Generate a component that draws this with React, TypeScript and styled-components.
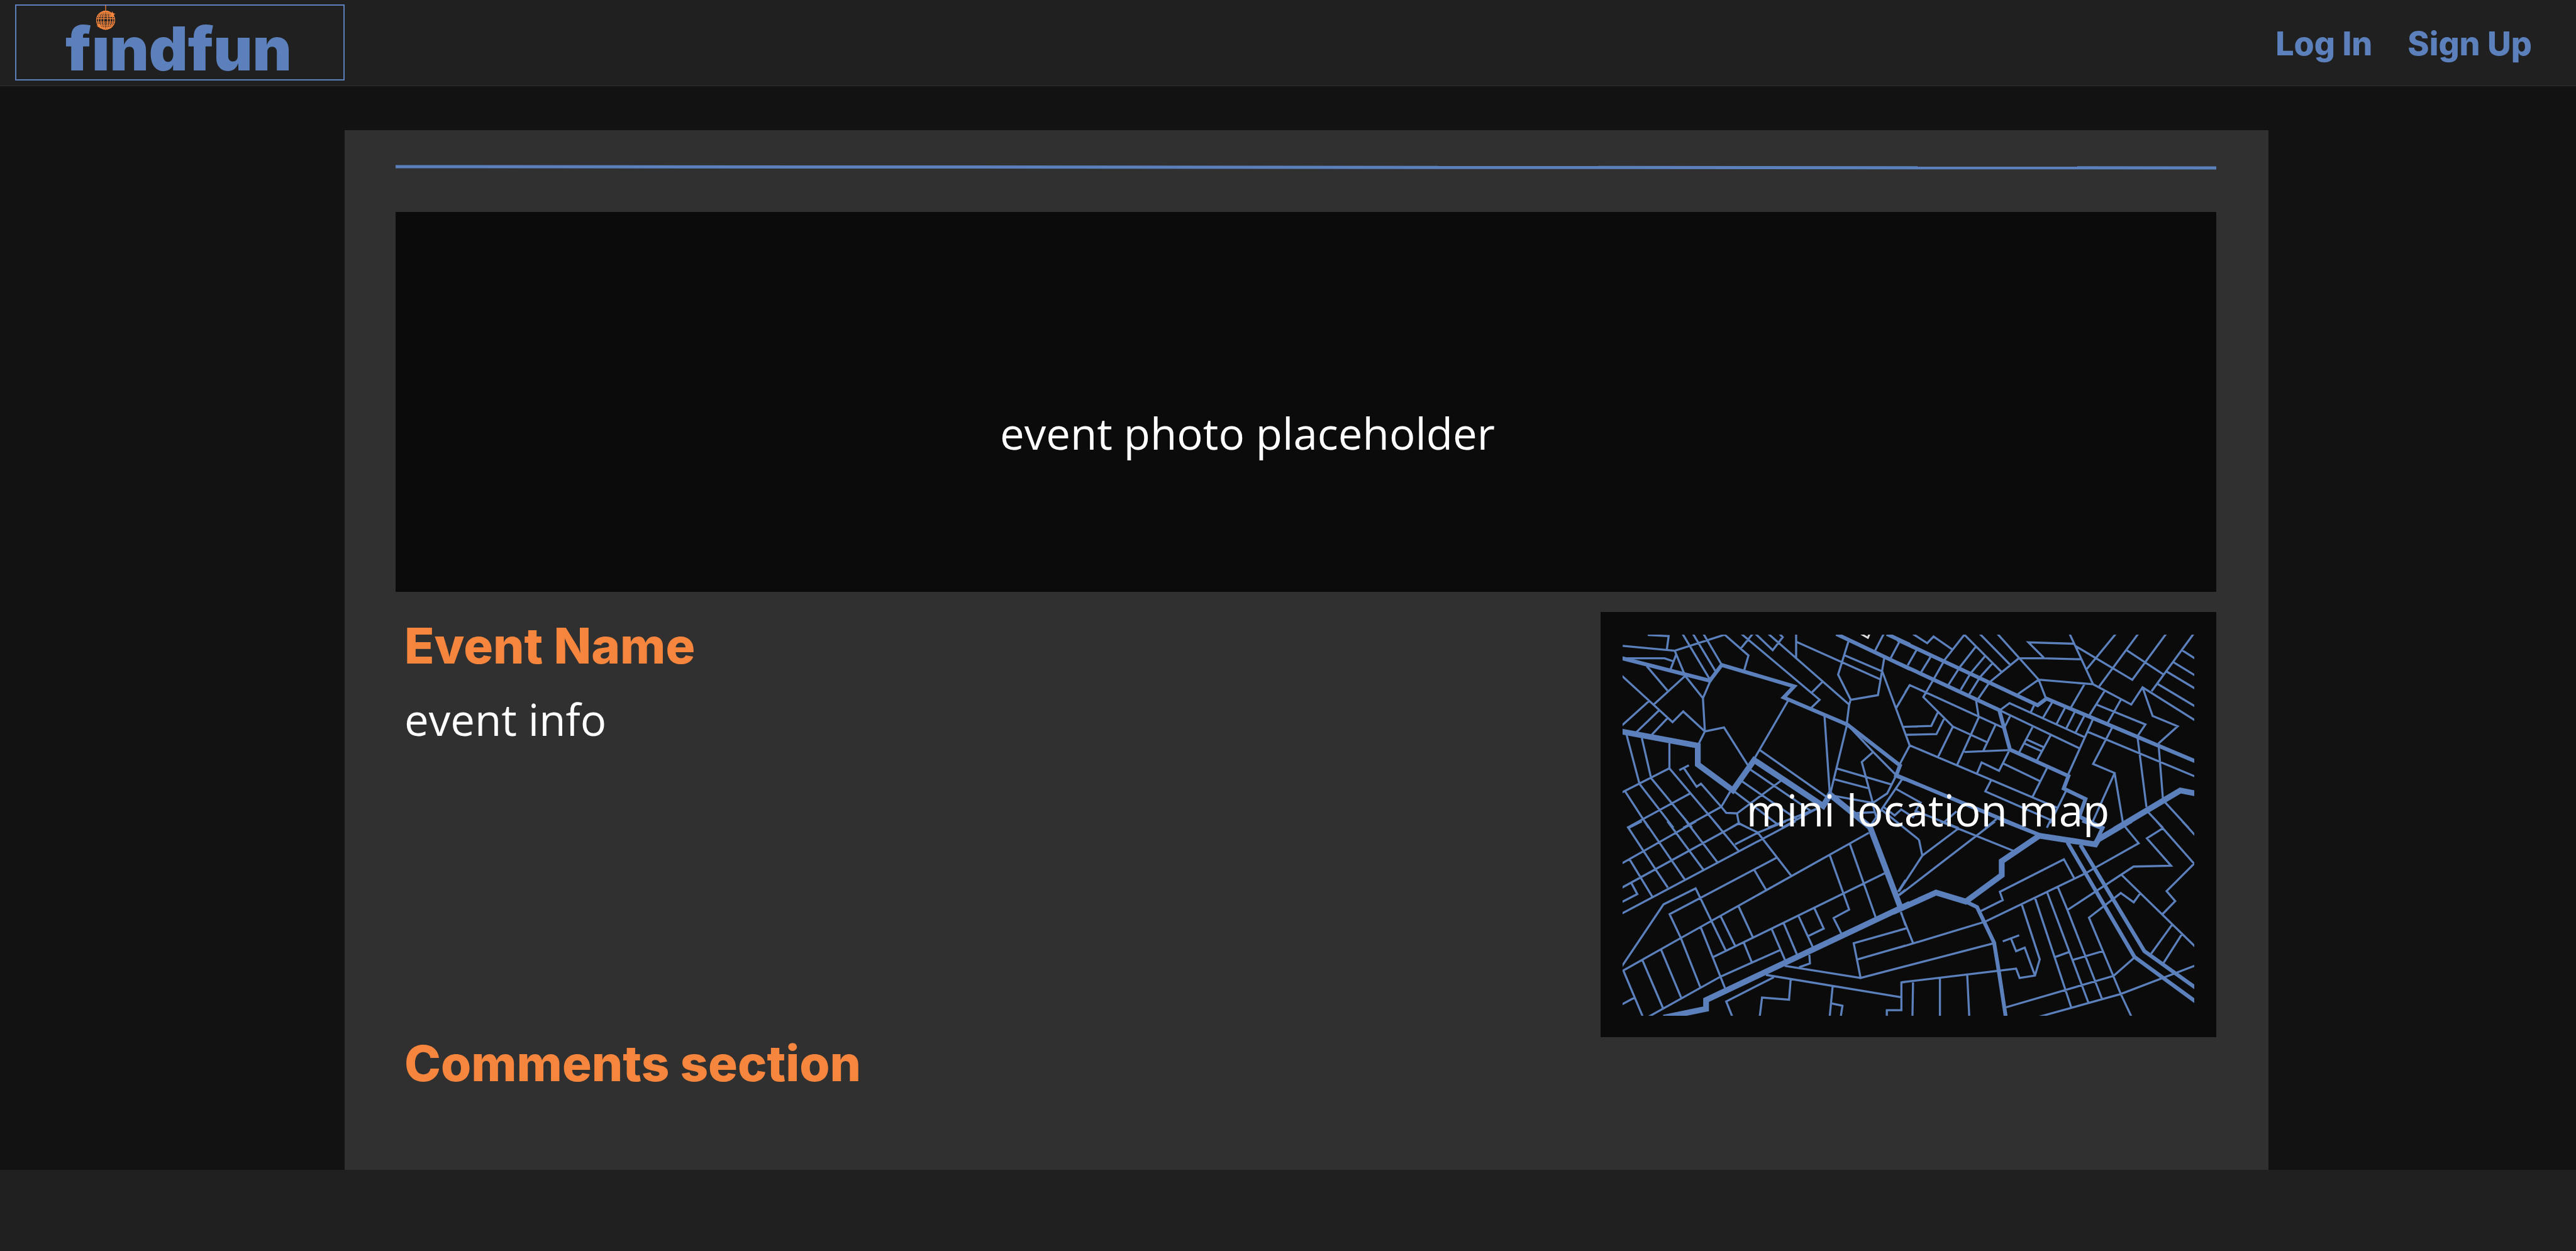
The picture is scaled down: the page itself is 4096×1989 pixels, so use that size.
import React from "react";
import styled, { createGlobalStyle, ThemeProvider } from "styled-components";

const theme = {
  blue: "#5b80bc",
  orange: "#f6863e",
  page: "#121212",
  bar: "#202020",
  card: "#303030",
  well: "#0b0b0b",
  display: "Inter, sans-serif",
  body: '"Open Sans", "Noto Sans", sans-serif',
};

type Theme = typeof theme;
const t = (key: keyof Theme) => (props: { theme: any }) => props.theme[key];

const GlobalStyle = createGlobalStyle`
  *, *::before, *::after { box-sizing: border-box; }
  body {
    margin: 0;
    background: ${theme.page};
    color: #fff;
    font-family: ${theme.body};
  }
`;

const Page = styled.div`
  min-height: 100vh;
  display: flex;
  flex-direction: column;
`;

const Header = styled.header`
  display: flex;
  align-items: center;
  justify-content: space-between;
  padding: 7px 70px 8px 24px;
  background: ${t("bar")};
  border-bottom: 1px solid #303030;
`;

const LogoLink = styled.a`
  position: relative;
  display: flex;
  justify-content: center;
  width: 524px;
  height: 121px;
  padding-right: 4px;
  border: 2px solid ${t("blue")};
  color: ${t("blue")};
  text-decoration: none;
`;

const Wordmark = styled.span`
  font-family: ${t("display")};
  font-weight: 900;
  font-size: 96px;
  line-height: 136px;
`;

const DiscoBall = styled.svg`
  position: absolute;
  left: 124px;
  top: -2px;
  width: 36px;
  height: 44px;
  fill: none;
  stroke: ${t("orange")};
`;

const Nav = styled.nav`
  display: flex;
  gap: 56px;
  padding-top: 4px;
`;

const NavLink = styled.a`
  color: ${t("blue")};
  font-family: ${t("display")};
  font-weight: 800;
  font-size: 52px;
  line-height: 56px;
  text-decoration: none;
`;

const Card = styled.main`
  flex: 1;
  display: flex;
  flex-direction: column;
  margin: 70px 489px 0 548px;
  padding: 55px 83px 0 81px;
  background: ${t("card")};
`;

const Rule = styled.svg`
  display: block;
  width: 100%;
  height: 8px;
  stroke: ${t("blue")};
  stroke-width: 5;
`;

const Caption = styled.p`
  margin: 0;
  font-size: 69px;
  line-height: 92px;
`;

const Photo = styled.section`
  display: flex;
  align-items: center;
  justify-content: center;
  height: 604px;
  margin-top: 67px;
  padding: 98px 186px 0 0;
  background: ${t("well")};
`;

const Details = styled.div`
  display: grid;
  grid-template-columns: 1fr 979px;
  margin-top: 32px;
`;

const Info = styled.section`
  display: flex;
  flex-direction: column;
  gap: 28px;
  padding: 12px 0 0 14px;
`;

const Heading = styled.h2`
  margin: 0;
  color: ${t("orange")};
  font-family: ${t("display")};
  font-weight: 800;
  font-size: 78px;
  line-height: 84px;
`;

const MapPanel = styled.section`
  position: relative;
  padding: 36px 35px 34px;
  background: ${t("well")};
`;

const MapLabel = styled(Caption)`
  position: absolute;
  inset: 0 0 48px 62px;
  display: flex;
  align-items: center;
  justify-content: center;
`;

const Streets = styled.svg`
  display: block;
  width: 100%;
  height: auto;
  fill: none;
  stroke: ${t("blue")};
`;

const Comments = styled.section`
  padding: 0 0 127px 14px;
`;

const Footer = styled.footer`
  height: 129px;
  background: ${t("bar")};
`;

/* The street network is stored in four tiles, each with its own origin and
   horizontal and vertical resolution. Roads are grouped by their class. */
type Tile = {
  x: number;
  y: number;
  sx: number;
  sy: number;
  lanes: string;
  streets: string;
  avenues: string;
};

const tiles: Tile[] = [
  {
    x: 4960, y: 1890, sx: 1.6333, sy: 2.3059,
    lanes: `260,187 366,195 357,290
133,265 397,300 650,185 771,334 750,437
133,354 345,354 388,375
397,300 450,480 540,640 550,878 519,965
404,328 376,432
437,180 575,505
490,180 605,450
543,180 633,395
736,180 1132,651 1090,708
792,180 732,284
808,180 894,296 945,203 930,180
873,180 1282,686
1013,180 1013,352
1013,235 1439,504
1147,522 1092,600
1278,234 1226,471 1290,651 1428,618 1460,352
1258,332 1450,448
1457,180 1414,298
1537,235 1493,352
1450,448 1589,978
1520,712 1589,546
255,410 360,585
128,479 386,812 440,735 550,878 647,849 767,1118
450,480 290,686
265,662 128,836
317,727 203,882
360,783 280,902
578,515 540,640
971,660 803,1068
1157,770 1183,1310
1290,651 1282,686 1270,820
1270,835 1187,1320
1270,825 1404,1025 1520,1190
1404,1025 1346,1097 1402,1390 1475,1322 1520,1195
1217,1142 1495,1257
1205,1220 1382,1286
1187,1335 1402,1390
829,1012 1165,1345
782,1152 1085,1445
935,1232 713,1465
153,905 218,1253
230,925 277,1212
370,962 370,1142
370,1142 128,1316
145,1307 265,1568
218,1253 390,1568
277,1212 485,1568
370,1142 625,1568
475,1322 155,1568
420,1155 469,1120
444,1142 508,1274 530,1252 633,1418 658,1461 713,1465 722,1535 680,1568
722,1535 770,1570
633,1418 440,1568
678,1310 633,1418
692,1300 925,1550
738,1235 1015,1505
870,1568 1116,1433
940,1568 1116,1433
1309,1464 1413,1456
1399,1387 1413,1457 1420,1491 1394,1545
1550,1222 1420,1491
1459,1422 1513,1480 1546,1437 1606,1491 1622,1446
1448,1441 1636,1654`,
    streets: `120,350 575,515 635,402 1003,555 950,635 1272,828 1540,1122 1520,1195 1568,1222
1217,180 1590,430
1473,180 1590,258`,
    avenues: `120,877 514,980 514,1115 692,1300 800,1083 1150,1412 1185,1330 1389,1565`,
  },
  {
    x: 5900, y: 1890, sx: 1.568, sy: 2.3059,
    lanes: `68,180 137,246 168,198 258,290
318,185 222,365 170,500 118,632 262,843 428,955
318,185 498,450
394,180 542,402
480,180 680,507
373,272 297,415 240,545
418,340 348,462 300,580
455,390 395,488 342,612
85,295 42,405
153,345 108,452
435,538 385,645
583,354 445,520
583,354 705,354 888,361
705,350 630,240 852,250
831,180 945,540
858,265 1136,508 1300,180
1055,180 915,430
1164,180 975,555
1110,298 1288,470
1434,180 1230,590
1380,298 1442,356
1337,382 1442,477
1305,450 1442,571
1260,538 1442,698
680,507 945,540 1131,685 1186,562 1442,799
1186,562 1235,767 1357,841 1263,965
680,507 578,612
680,507 715,640
902,542 838,705
1000,590 928,760
1080,652 1017,815
962,686 1200,828 1163,908
30,596 52,546 505,850
190,738 157,838 22,845
220,785 182,897 35,902
5,1108 52,978 770,1425
262,843 190,1060
388,778 283,1117
375,655 388,778
470,830 410,1018
318,1025 535,1012
540,770 515,845
492,725 538,675 905,920
495,730 880,1000
650,848 585,1028
738,905 672,1085
620,935 703,990
612,965 692,1018
745,672 702,778
658,690 642,740
808,710 768,822
855,740 815,855
902,768 860,885
943,795 905,920 823,1188
918,880 1442,1201
1038,850 945,1111 1050,1176 940,1535
1050,1176 1090,1530
1162,925 1205,1420
1265,990 1285,1355
1213,1455 1285,1568
1295,1385 1410,1568
535,1020 487,1160 402,1100 380,1178
508,1108 688,1235
720,1142 650,1347
447,1232 420,1307 738,1512 720,1568
812,1308 735,1535
-13,1291 105,1388 78,1453
85,1450 290,1570
280,1450 222,1525
475,1505 420,1570`,
    streets: `-8,220 675,690 718,643 1445,1093
-8,387 488,725 540,1008 825,1197 802,1287 908,1362 878,1488 1000,1575
-20,1188 600,1568`,
    avenues: `1450,1324 1370,1301 1050,1581`,
  },
  {
    x: 4960, y: 2550, sx: 1.6333, sy: 2.3059,
    lanes: `230,0 162,48 300,345 362,475
245,0 447,415
360,0 543,347
455,0 613,292
597,0 720,210
505,0 128,302
722,15 128,476
722,0 722,15 818,80 987,388
818,82 960,0
818,82 703,165
1010,0 128,661
168,273 283,540
178,445 207,521 128,579
128,1040 340,595 503,480 655,923
912,262 371,665 428,836 527,1190
800,347 860,490
1382,82 428,836 136,1068 233,1393 236,1403
720,607 793,830
630,680 703,890
530,762 652,1195
328,920 430,1265
233,995 338,1340
192,1263 128,1312
260,1403 630,1112 932,922
1462,372 593,972
747,867 788,1010
888,768 957,995
950,730 1018,957
1025,678 1098,903
1105,620 1153,768 1073,823
1183,240 1282,632 1203,693 1242,803
1285,160 1417,690
1568,768 1305,873 1340,1122 1568,1037
1322,990 1568,890
955,1035 1340,1122
1080,955 1083,1018 1028,1045
860,1100 1547,1260
900,1117 658,1290 690,1403
985,1135 977,1278 840,1262 828,1403
1198,1185 1183,1403
1190,1303 1248,1321 1239,1403
1568,1151 1547,1154 1547,1353 1473,1353 1473,1403
1530,505 1568,420
1530,530 1568,490
1545,650 1568,745`,
    streets: ``,
    avenues: `1385,30 1543,620
1590,590 556,1280 556,1343 340,1406`,
  },
  {
    x: 5900, y: 2550, sx: 1.568, sy: 2.3059,
    lanes: `0,500 113,246 290,50
0,530 468,0
200,0 555,210
97,132 113,246
1100,38 1167,157 958,330 905,375 420,718 0,905
1285,50 1207,122 1325,318 1142,324 820,635
1255,0 1437,303 1303,500 1345,571 1283,665
1380,0 1442,100
1085,385 1442,897
1175,515 1143,580 1080,514 925,690 1080,1237 1133,1403
773,470 820,635 988,1270
722,512 922,1298
663,552 838,1330
598,597 685,989 662,1105 587,1122 570,1055 12,1153
662,1105 612,905 570,930 546,842
505,860 585,816
760,972 830,935
848,992 992,930
395,645 505,564 491,505 803,272 852,405
0,1050 465,872
522,1332 1045,1107 1147,975
675,1403 1080,1237 1442,1033
1330,740 1228,948
1378,808 1288,1015
68,1148 65,1403
199,1125 199,1403
332,1100 342,1403
8,650 68,872
0,780 38,765`,
    streets: `820,150 1147,972 1450,1297
883,168 1195,930 1450,1198
325,575 380,615 463,870 486,1075 520,1403
500,-10 690,100
893,-5 990,50 965,130`,
    avenues: `1130,-8 970,130 956,165 683,103 500,285 500,385 325,575 180,510 -30,650`,
  },
];

const trace = (kind: "lanes" | "streets" | "avenues") =>
  tiles
    .flatMap((tile) =>
      tile[kind]
        .split("\n")
        .filter(Boolean)
        .map(
          (line) =>
            "M" +
            line
              .trim()
              .split(" ")
              .map((pair) => {
                const [px, py] = pair.split(",").map(Number);
                return `${(tile.x + px / tile.sx).toFixed(1)} ${(tile.y + py / tile.sy).toFixed(1)}`;
              })
              .join("L")
        )
    )
    .join("");

const StreetMap = () => (
  <Streets viewBox="5041 1970 1776 1184" aria-hidden="true">
    <path d={trace("lanes")} strokeWidth="6.5" />
    <path d={trace("streets")} strokeWidth="12" />
    <path d={trace("avenues")} strokeWidth="18" />
    <path d="M5782 1968L5803 1980L5808 1968" stroke="#dcdcdc" strokeWidth="6" />
  </Streets>
);

const Ball = () => (
  <DiscoBall viewBox="0 0 72 88" aria-hidden="true">
    <path d="M36 2V20" strokeWidth="2.5" />
    <circle cx="36" cy="50" r="29" strokeWidth="2.5" />
    <g strokeWidth="2.5">
      <ellipse cx="36" cy="50" rx="23" ry="29" />
      <ellipse cx="36" cy="50" rx="15" ry="29" />
      <ellipse cx="36" cy="50" rx="6" ry="29" />
      <path d="M22 25H50M17 29H55M12 34H60M9 39H63M7 45H65M7 56H65M9 62H63M12 67H60M17 72H55M24 76H48" />
    </g>
    <g fill="#f6863e" stroke="none">
      <path d="M57 22L60 28L67 30L61 34L62 41L56 37L49 39L52 33L48 27L55 28Z" />
      <path d="M15 60L18 65L25 66L20 70L20 77L15 73L8 70L13 68L6 66L12 65Z" />
    </g>
  </DiscoBall>
);

export default function App() {
  return (
    <ThemeProvider theme={theme}>
      <GlobalStyle />
      <Page>
        <Header>
          <LogoLink href="#" aria-label="findfun">
            <Wordmark>fındfun</Wordmark>
            <Ball />
          </LogoLink>
          <Nav>
            <NavLink href="#login">Log In</NavLink>
            <NavLink href="#signup">Sign Up</NavLink>
          </Nav>
        </Header>
        <Card>
          <Rule viewBox="0 0 2896 8" preserveAspectRatio="none" aria-hidden="true">
            <line x1="0" y1="3" x2="2896" y2="5" />
          </Rule>
          <Photo>
            <Caption>event photo placeholder</Caption>
          </Photo>
          <Details>
            <Info>
              <Heading>Event Name</Heading>
              <Caption>event info</Caption>
            </Info>
            <MapPanel>
              <StreetMap />
              <MapLabel>mini location map</MapLabel>
            </MapPanel>
          </Details>
          <Comments>
            <Heading>Comments section</Heading>
          </Comments>
        </Card>
        <Footer />
      </Page>
    </ThemeProvider>
  );
}
